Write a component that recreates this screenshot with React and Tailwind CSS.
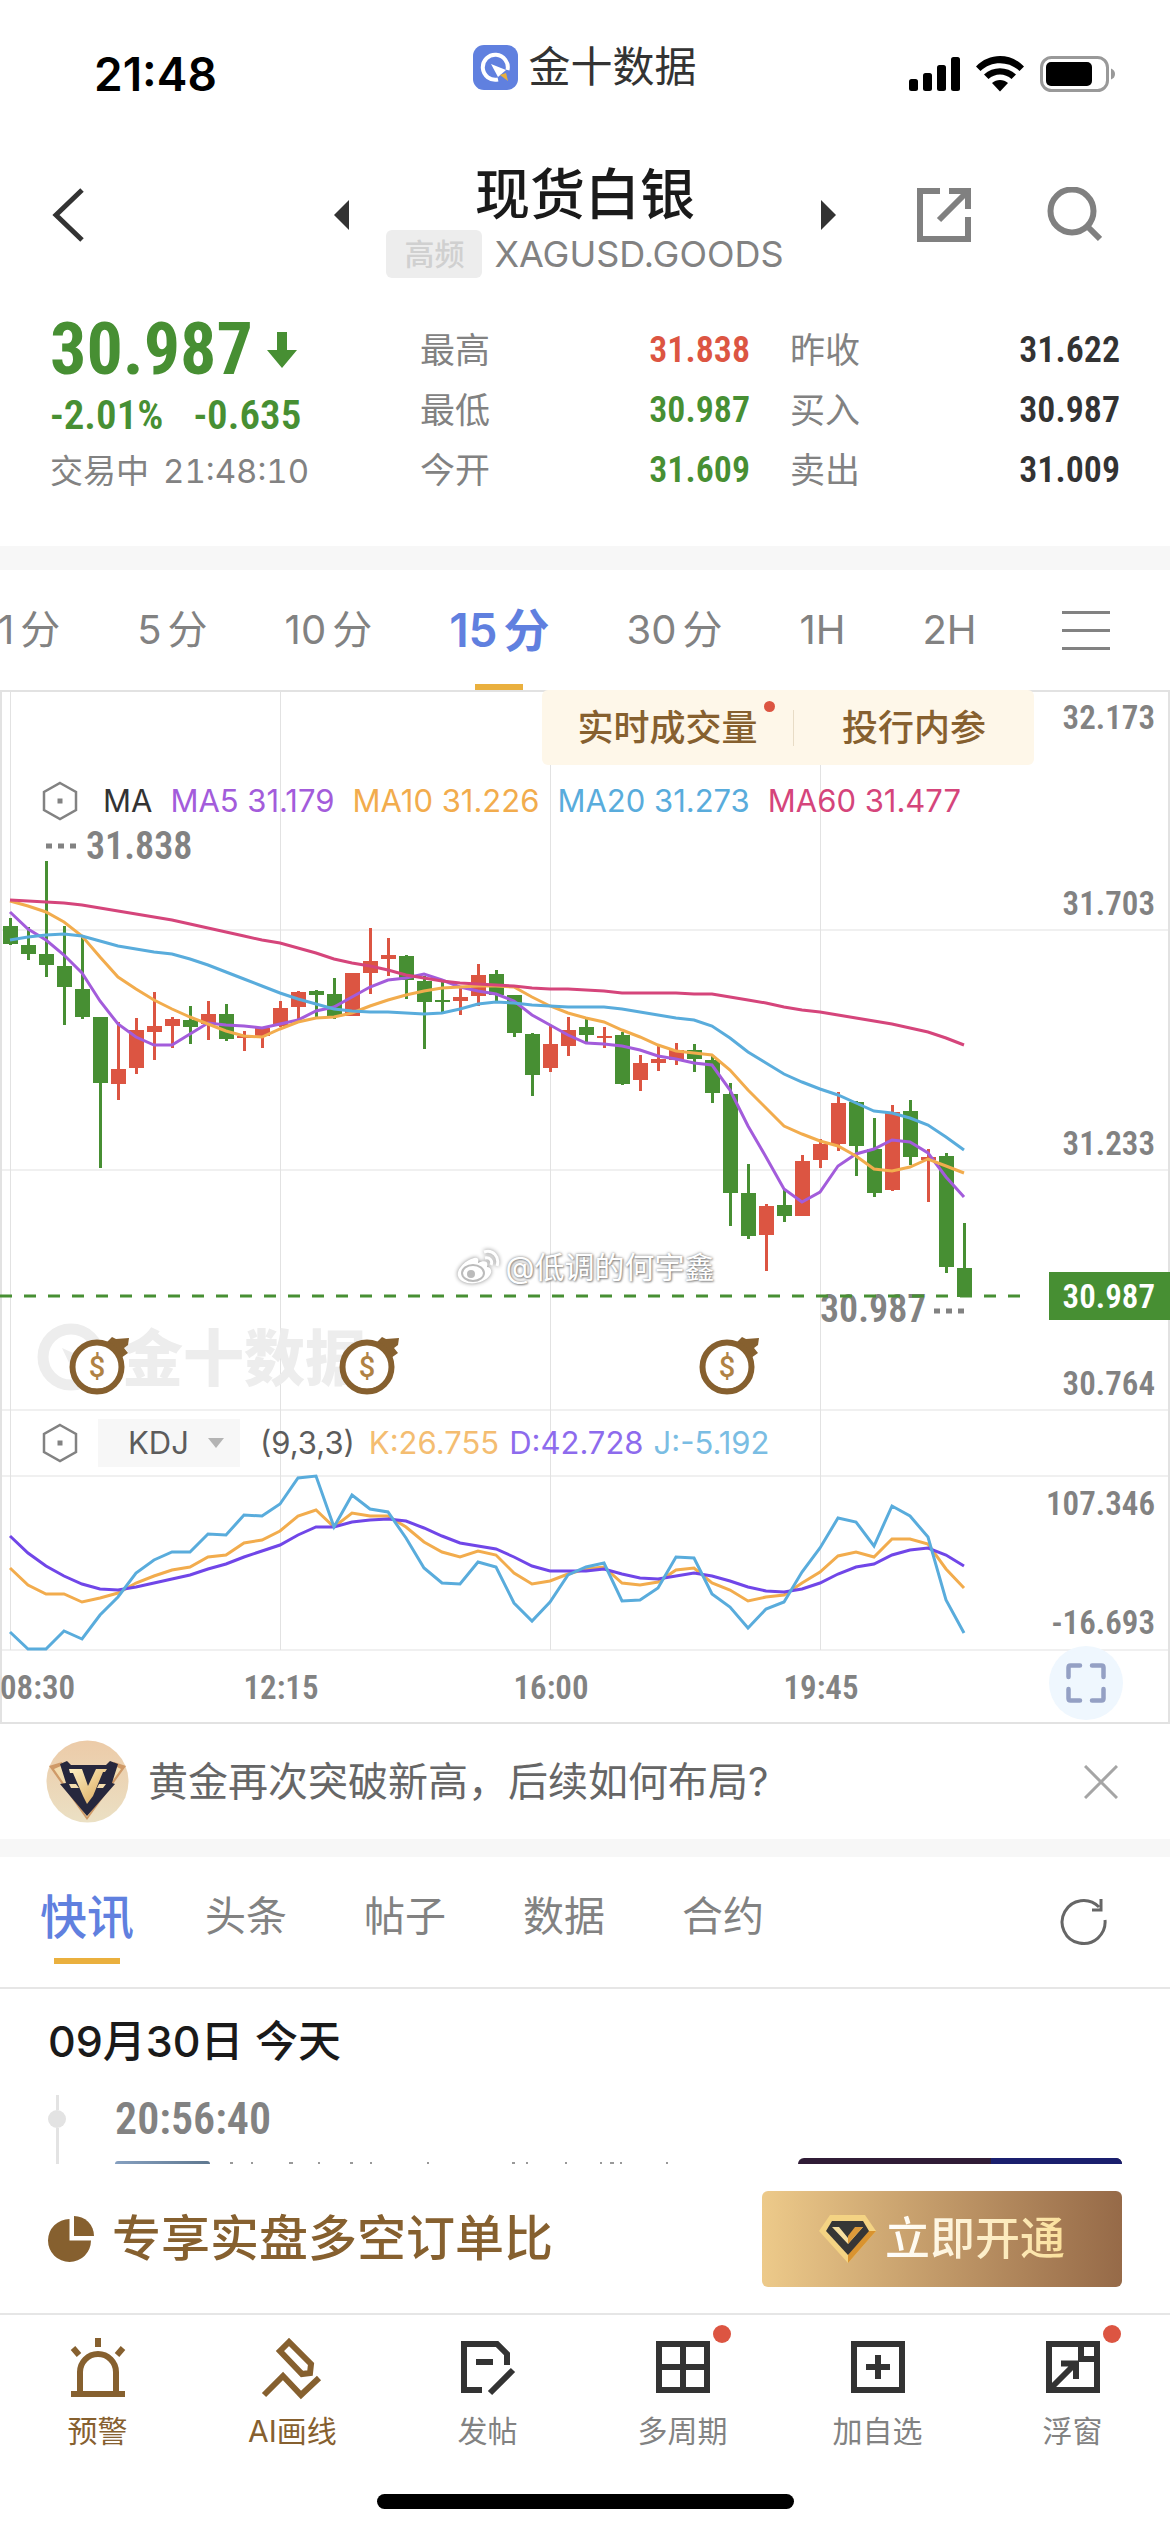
import React from "react";
import clsx from "clsx";

const DIN = "font-['Roboto_Condensed','Liberation_Sans_Narrow',Roboto,sans-serif] font-semibold";

const GREEN = "#478f33";
const RED = "#dc5542";

const periods = [
  { num: "1", unit: "分" },
  { num: "5", unit: "分" },
  { num: "10", unit: "分" },
  { num: "15", unit: "分", active: true },
  { num: "30", unit: "分" },
  { num: "1H" },
  { num: "2H" },
];

// up/down, high, body top, body bottom, low
const candles = [
  ["d", 918, 926, 944, 945], ["d", 927, 945, 954, 960], ["d", 861, 954, 965, 977],
  ["d", 926, 966, 987, 1025], ["d", 935, 989, 1017, 1019], ["d", 1017, 1017, 1083, 1168],
  ["u", 1022, 1069, 1084, 1100], ["u", 1018, 1030, 1068, 1074], ["u", 992, 1026, 1032, 1060],
  ["u", 1017, 1019, 1026, 1048], ["d", 1006, 1020, 1027, 1044], ["u", 1001, 1014, 1024, 1040],
  ["d", 1004, 1014, 1039, 1041], ["u", 1031, 1036, 1038, 1051], ["u", 1028, 1028, 1036, 1048],
  ["u", 1001, 1008, 1026, 1027], ["u", 991, 992, 1007, 1020], ["d", 990, 991, 995, 1018],
  ["d", 978, 994, 1016, 1019], ["u", 973, 973, 1016, 1016], ["u", 928, 961, 973, 994],
  ["u", 938, 955, 959, 976], ["d", 955, 956, 980, 999], ["d", 976, 981, 1002, 1049],
  ["d", 981, 1000, 1002, 1013], ["u", 987, 997, 1001, 1015], ["u", 964, 975, 996, 1006],
  ["d", 970, 974, 995, 1001], ["d", 995, 995, 1033, 1037], ["d", 1033, 1034, 1075, 1096],
  ["u", 1025, 1044, 1068, 1072], ["u", 1017, 1030, 1046, 1056], ["d", 1018, 1027, 1035, 1042],
  ["u", 1027, 1036, 1038, 1048], ["d", 1032, 1035, 1084, 1085], ["u", 1055, 1063, 1080, 1091],
  ["u", 1045, 1059, 1063, 1071], ["u", 1043, 1050, 1060, 1065], ["d", 1044, 1050, 1059, 1072],
  ["d", 1056, 1060, 1093, 1103], ["d", 1083, 1094, 1193, 1226], ["d", 1164, 1193, 1236, 1239],
  ["u", 1204, 1206, 1235, 1271], ["d", 1190, 1205, 1216, 1222], ["u", 1155, 1161, 1216, 1216],
  ["u", 1139, 1144, 1160, 1168], ["u", 1092, 1103, 1144, 1151], ["d", 1101, 1102, 1146, 1176],
  ["d", 1118, 1149, 1193, 1197], ["u", 1105, 1112, 1190, 1191], ["d", 1100, 1111, 1157, 1165],
  ["u", 1149, 1157, 1160, 1202], ["d", 1153, 1156, 1267, 1273], ["d", 1223, 1268, 1297, 1297],
];

const maLines = [
  {
    color: "#a35cdb",
    ys: [912, 929, 940, 955, 973, 1001, 1024, 1037, 1045, 1045, 1034, 1023, 1025, 1026, 1028, 1024, 1020, 1011, 1007, 997, 987, 980, 978, 974, 980, 987, 991, 994, 1001, 1015, 1025, 1035, 1043, 1044, 1046, 1050, 1056, 1059, 1063, 1065, 1090, 1126, 1157, 1189, 1202, 1192, 1166, 1154, 1149, 1140, 1142, 1153, 1177, 1197],
  },
  {
    color: "#f2ac4d",
    ys: [901, 906, 912, 922, 936, 957, 977, 989, 1000, 1009, 1017, 1024, 1031, 1036, 1037, 1029, 1022, 1018, 1017, 1013, 1006, 1000, 995, 991, 988, 987, 986, 986, 987, 997, 1006, 1013, 1018, 1022, 1030, 1037, 1045, 1051, 1053, 1055, 1070, 1090, 1108, 1126, 1134, 1141, 1146, 1156, 1169, 1171, 1167, 1159, 1166, 1173],
  },
  {
    color: "#59acdc",
    ys: [940, 937, 935, 934, 936, 941, 946, 949, 952, 954, 959, 965, 972, 979, 986, 993, 999, 1004, 1009, 1011, 1012, 1012, 1013, 1014, 1013, 1009, 1004, 1002, 1003, 1005, 1006, 1007, 1007, 1007, 1009, 1012, 1015, 1018, 1020, 1026, 1038, 1052, 1063, 1074, 1082, 1089, 1095, 1103, 1111, 1113, 1118, 1125, 1137, 1150],
  },
  {
    color: "#d5457b",
    ys: [900, 901, 902, 903, 905, 908, 911, 914, 917, 920, 924, 928, 932, 936, 940, 943, 948, 953, 959, 963, 966, 970, 975, 978, 981, 983, 984, 985, 986, 988, 989, 989, 990, 991, 993, 993, 993, 993, 994, 994, 997, 1000, 1003, 1007, 1010, 1012, 1015, 1018, 1021, 1024, 1028, 1032, 1038, 1045],
  },
];

const kdjLines = [
  {
    color: "#f2ac4d",
    ys: [1568, 1585, 1594, 1594, 1602, 1598, 1593, 1583, 1576, 1570, 1567, 1557, 1555, 1543, 1540, 1531, 1516, 1510, 1527, 1513, 1516, 1516, 1527, 1542, 1552, 1557, 1551, 1555, 1573, 1584, 1581, 1574, 1569, 1567, 1583, 1585, 1582, 1570, 1568, 1583, 1590, 1601, 1597, 1595, 1583, 1572, 1556, 1552, 1557, 1539, 1539, 1544, 1569, 1588],
  },
  {
    color: "#7046e8",
    ys: [1536, 1553, 1566, 1576, 1584, 1589, 1590, 1587, 1583, 1579, 1575, 1569, 1564, 1557, 1551, 1545, 1535, 1527, 1527, 1522, 1520, 1519, 1521, 1528, 1536, 1543, 1546, 1549, 1557, 1566, 1571, 1571, 1571, 1569, 1574, 1578, 1579, 1576, 1573, 1576, 1581, 1587, 1591, 1592, 1589, 1583, 1574, 1567, 1564, 1555, 1550, 1548, 1555, 1566],
  },
  {
    color: "#59acdc",
    ys: [1632, 1649, 1649, 1631, 1639, 1615, 1597, 1573, 1560, 1552, 1552, 1534, 1535, 1515, 1516, 1504, 1478, 1476, 1527, 1495, 1509, 1512, 1538, 1568, 1583, 1584, 1562, 1567, 1603, 1621, 1602, 1575, 1567, 1563, 1601, 1600, 1588, 1557, 1558, 1594, 1607, 1628, 1609, 1602, 1572, 1548, 1518, 1522, 1546, 1506, 1516, 1537, 1600, 1633],
  },
];

const axisLabels = [
  ["32.173", 717], ["31.703", 903], ["31.233", 1143], ["30.764", 1383],
  ["107.346", 1503], ["-16.693", 1622],
];

const xAt = (i) => 10 + i * 18;
const toPoints = (ys) => ys.map((y, i) => `${xAt(i)},${y}`).join(" ");

const Line = ({ color, ys }) => (
  <polyline points={toPoints(ys)} fill="none" stroke={color} strokeWidth="3" />
);

const MoneyBag = ({ x }) => (
  <g transform={`translate(${x} 1367)`}>
    <path d="M12 -21 L10 -25 L15 -30 L19 -28 L32 -29 L31 -22 L27 -19 L31 -14 L24 -9 Z" fill="#86602f" />
    <circle r="24.5" fill="#fff" stroke="#86602f" strokeWidth="6" />
    <path d="M-14 20 A25 25 0 0 0 14 20 A30 30 0 0 1 -14 20" fill="#86602f" stroke="#86602f" strokeWidth="4" />
    <text y="10" textAnchor="middle" fontSize="29" fill="#b08244" className="font-[Roboto,sans-serif] font-medium">$</text>
  </g>
);

const Chart = () => (
  <svg viewBox="0 690 1170 1034" className="absolute inset-0 h-full w-full" aria-hidden="true">
    <g stroke="#f0f0f0" strokeWidth="2">
      {[930, 1170, 1410, 1476, 1650].map((y) => (
        <line key={y} x1="0" x2="1170" y1={y} y2={y} />
      ))}
    </g>
    <g stroke="#e2e2e2" strokeWidth="1">
      {[10.5, 280.5, 550.5, 820.5].map((x) => (
        <line key={x} x1={x} x2={x} y1="690" y2="1650" />
      ))}
    </g>
    <rect x="1" y="691" width="1168" height="1032" fill="none" stroke="#e2e2e2" strokeWidth="2" />

    {/* faded brand mark */}
    <circle cx="71" cy="1357" r="28" fill="none" stroke="#ededed" strokeWidth="11" />
    <path d="M62 1348 L82 1357 L71 1367 Z" fill="#ededed" />
    <text x="122" y="1381" fontSize="61" fill="#ededed" className="font-['Noto_Sans_CJK_SC',sans-serif] font-black">金十数据</text>

    <g className={DIN} fill="#828282" fontSize="38">
      <text x="86" y="859">31.838</text>
      <text x="820" y="1322">30.987</text>
    </g>
    <path d="M46 846h6m6 0h6m6 0h6M934 1311h6m6 0h6m6 0h6" stroke="#828282" strokeWidth="5" />

    <line x1="0" x2="1022" y1="1296" y2="1296" stroke={GREEN} strokeWidth="3" strokeDasharray="12 12" />
    {candles.map(([dir, high, top, bottom, low], i) => (
      <g key={i} fill={dir === "u" ? RED : GREEN}>
        <rect x={xAt(i) - 1} y={high} width="3" height={low - high} />
        <rect x={xAt(i) - 7} y={top} width="15" height={bottom - top} />
      </g>
    ))}
    {maLines.map((line) => <Line key={line.color} {...line} />)}
    {kdjLines.map((line) => <Line key={line.color} {...line} />)}

    <MoneyBag x={97} />
    <MoneyBag x={367} />
    <MoneyBag x={727} />

    <rect x="1049" y="1272" width="121" height="48" fill={GREEN} />
    <g className={DIN} fontSize="33" fill="#828282">
      {axisLabels.map(([label, y]) => (
        <text key={label} x="1155" y={y + 12} textAnchor="end">{label}</text>
      ))}
      <text x="1155" y="1308" textAnchor="end" fill="#fff">30.987</text>
      <text x="0" y="1699">08:30</text>
      <text x="281" y="1699" textAnchor="middle">12:15</text>
      <text x="551" y="1699" textAnchor="middle">16:00</text>
      <text x="821" y="1699" textAnchor="middle">19:45</text>
    </g>
  </svg>
);

const Hexagon = () => (
  <svg viewBox="0 0 36 40" className="h-[40px] w-[36px]">
    <path d="M18 2 L34 11 V29 L18 38 L2 29 V11 Z" fill="none" stroke="#828282" strokeWidth="2.5" />
    <rect x="15.5" y="17.5" width="5" height="5" fill="#828282" />
  </svg>
);

const StatusBar = () => (
  <div className="grid h-[134px] grid-cols-3 items-center pl-[94px] pr-[54px]">
    <span className="pt-[14px] text-[46px] font-semibold leading-none text-black">21:48</span>
    <div className="-ml-10 flex items-center justify-center gap-[10px]">
      <svg viewBox="0 0 45 45" className="size-[45px]">
        <rect width="45" height="45" rx="11" fill="#6080df" />
        <path d="M25 34.5 A12.5 12.5 0 1 1 34.5 25" fill="none" stroke="#fff" strokeWidth="4" />
        <path d="M18 19 L33 25 L25 32 Z" fill="#fff" />
        <path d="M27 30 L33 28 L35 36 Z" fill="#e9af3c" />
      </svg>
      <span className="text-[42px] leading-none text-[#333]">金十数据</span>
    </div>
    <div className="flex items-center justify-end gap-[16px] pt-[14px]">
      <svg viewBox="0 0 51 34" className="h-[34px] w-[51px]">
        <rect y="22" width="9" height="12" rx="2.5" />
        <rect x="14" y="16" width="9" height="18" rx="2.5" />
        <rect x="28" y="8" width="9" height="26" rx="2.5" />
        <rect x="42" width="9" height="34" rx="2.5" />
      </svg>
      <svg viewBox="0 0 48 36" className="h-[36px] w-[48px]">
        <path d="M0 10.500 C13 -3.500 35 -3.500 48 10.500 L43.500 15 C33 4.500 15 4.500 4.500 15 Z" />
        <path d="M8 18.500 C17 10 31 10 40 18.500 L35.500 23 C29 17 19 17 12.500 23 Z" />
        <path d="M16 27 C20.500 23 27.500 23 32 27 L24 35.500 Z" />
      </svg>
      <svg viewBox="0 0 76 36" className="h-[36px] w-[76px]">
        <rect x="1.500" y="1.500" width="66" height="33" rx="10" fill="none" stroke="#999" strokeWidth="3" />
        <rect x="6" y="6" width="46" height="24" rx="5" />
        <path d="M71 12.500 Q75 14 75 18 T71 23.500 Z" fill="#999" />
      </svg>
    </div>
  </div>
);

const Header = () => (
  <header className="grid h-[156px] grid-cols-[284px_1fr_284px] items-center px-[50px] pt-[6px]">
    <button aria-label="返回" className="w-[40px]">
      <svg viewBox="0 0 36 54" className="h-[54px] w-[36px]">
        <path d="M32 2 L6 27 L32 52" fill="none" stroke="#333" strokeWidth="5" />
      </svg>
    </button>
    <div className="flex items-center justify-between">
      <button aria-label="上一个">
        <svg viewBox="0 0 15 30" className="h-[30px] w-[15px]"><path d="M15 0 V30 L0 15 Z" fill="#333" /></svg>
      </button>
      <div className="flex flex-col items-center gap-[6px] pt-[12px]">
        <h1 className="text-[55px] font-medium leading-[60px] text-[#1a1a1a]">现货白银</h1>
        <div className="flex items-center gap-[12px]">
          <span className="flex h-[48px] w-[96px] items-center justify-center rounded-md bg-[#ededed] text-[30px] font-medium text-[#d0d0d0]">高频</span>
          <span className="text-[36px] leading-none text-[#828282]">XAGUSD.GOODS</span>
        </div>
      </div>
      <button aria-label="下一个">
        <svg viewBox="0 0 15 30" className="h-[30px] w-[15px]"><path d="M0 0 V30 L15 15 Z" fill="#333" /></svg>
      </button>
    </div>
    <div className="flex items-center justify-end gap-[74px] pr-[18px]">
      <button aria-label="分享">
        <svg viewBox="0 0 56 56" className="size-[56px]">
          <path d="M24 4 H4 V52 H52 V30 M33 4 H52 V22 M52 4 L23 33" fill="none" stroke="#808080" strokeWidth="6" />
        </svg>
      </button>
      <button aria-label="搜索">
        <svg viewBox="0 0 56 56" className="size-[56px]">
          <circle cx="26" cy="24" r="21.5" fill="none" stroke="#808080" strokeWidth="6" />
          <path d="M41 39 L54 52" stroke="#808080" strokeWidth="6" />
        </svg>
      </button>
    </div>
  </header>
);

const Quote = ({ label, value, color }) => (
  <div className="flex h-[60px] items-center justify-between">
    <dt className="text-[35px] text-[#828282]">{label}</dt>
    <dd className={clsx(DIN, "text-[36px]", color)}>{value}</dd>
  </div>
);

const Quotes = () => (
  <section className="grid h-[256px] grid-cols-3 gap-10 px-[50px] pt-[30px]">
    <div className="whitespace-nowrap">
      <div className={clsx(DIN, "flex h-[60px] items-center gap-[14px] text-[72px] text-[#478f33]")}>
        <span className="font-bold">30.987</span>
        <svg viewBox="0 0 30 36" className="h-[36px] w-[30px]"><path d="M10 0 H20 V18 H30 L15 36 L0 18 H10 Z" fill={GREEN} /></svg>
      </div>
      <div className={clsx(DIN, "flex h-[72px] items-center gap-[30px] text-[41px] text-[#478f33]")}>
        <span>-2.01%</span>
        <span>-0.635</span>
      </div>
      <div className="flex h-[40px] items-center gap-[14px] text-[33px] text-[#828282]">
        <span>交易中</span>
        <span className="tabular-nums">21:48:10</span>
      </div>
    </div>
    <dl>
      <Quote label="最高" value="31.838" color="text-[#dc5542]" />
      <Quote label="最低" value="30.987" color="text-[#478f33]" />
      <Quote label="今开" value="31.609" color="text-[#478f33]" />
    </dl>
    <dl>
      <Quote label="昨收" value="31.622" color="text-[#333]" />
      <Quote label="买入" value="30.987" color="text-[#333]" />
      <Quote label="卖出" value="31.009" color="text-[#333]" />
    </dl>
  </section>
);

const PeriodTabs = () => (
  <nav className="flex h-[120px] items-center justify-between overflow-hidden pr-[60px]">
    <div className="-ml-[2px] flex h-full items-center gap-[77px]">
      {periods.map(({ num, unit, active }) => (
        <button
          key={num}
          className={clsx(
            "relative flex h-full items-center gap-[6px] whitespace-nowrap leading-none",
            active ? "text-[46px] font-semibold text-[#6080df]" : "text-[40px] text-[#828282]"
          )}
        >
          <span>{num}</span>
          {unit && <span>{unit}</span>}
          {active && <span className="absolute bottom-0 left-1/2 h-[6px] w-[48px] -translate-x-1/2 bg-[#eab03e]" />}
        </button>
      ))}
    </div>
    <button aria-label="更多周期" className="flex w-[48px] flex-col gap-[15px]">
      <span className="h-[3px] bg-[#828282]" />
      <span className="h-[3px] bg-[#828282]" />
      <span className="h-[3px] bg-[#828282]" />
    </button>
  </nav>
);

const ChartSection = () => (
  <section className="relative flex h-[1034px] flex-col">
    <Chart />
    {/* 实时成交量 / 投行内参 */}
    <div className="relative mr-[136px] flex h-[75px] w-[492px] items-center self-end rounded-md bg-[#fef7e9] text-[36px] font-medium text-[#86602f]">
      <button className="relative flex-1">
        实时成交量
        <span className="absolute right-[18px] top-0 size-[11px] rounded-full bg-[#dc5542]" />
      </button>
      <span className="h-[36px] w-px bg-[#e8dcc6]" />
      <button className="w-[240px]">投行内参</button>
    </div>
    <div className="relative mt-[16px] flex h-[40px] items-center gap-[20px] whitespace-nowrap pl-[42px] text-[31px]">
      <Hexagon />
      <div className="flex gap-[18px] pl-[5px]">
        <span className="text-[#333]">MA</span>
        <span className="text-[#a35cdb]">MA5 31.179</span>
        <span className="text-[#f2ac4d]">MA10 31.226</span>
        <span className="text-[#59acdc]">MA20 31.273</span>
        <span className="text-[#d5457b]">MA60 31.477</span>
      </div>
    </div>
    {/* user watermark */}
    <div className="relative mt-[424px] flex h-[44px] items-center justify-center gap-[6px]">
      <svg viewBox="0 0 44 36" className="h-[36px] w-[44px] drop-shadow-[0_0_2px_#888]">
        <path d="M18 9 C9 11 0 21 2 27 C5 37 27 37 34 26 C37 21 34 18 31 18 C33 12 28 11 22 14 C23 10 22 8 18 9 Z" fill="#fff" />
        <ellipse cx="17" cy="24" rx="11" ry="8" fill="none" stroke="#bbb" strokeWidth="2" />
        <circle cx="15" cy="25" r="4" fill="#bbb" />
        <path d="M28 3 C37 0 44 8 41 17 M29 9 C34 8 37 12 35 16" fill="none" stroke="#fff" strokeWidth="3" />
      </svg>
      <span className="text-[30px] leading-none text-white [text-shadow:0_0_3px_#777,1px_1px_2px_#999]">@低调的何宇鑫</span>
    </div>
    <div className="relative mt-[122px] flex h-[64px] items-center gap-[20px] whitespace-nowrap pl-[42px] text-[31px]">
      <Hexagon />
      <label className="relative flex h-[48px] w-[142px] items-center bg-[#f7f7f7]">
        <select aria-label="指标" className="w-full appearance-none bg-transparent pl-[30px] text-[31px] text-[#5c5c5c]">
          <option>KDJ</option>
        </select>
        <svg viewBox="0 0 16 10" className="absolute right-[16px] h-[10px] w-[16px]"><path d="M0 0 H16 L8 10 Z" fill="#b4b4b4" /></svg>
      </label>
      <div className="flex gap-[10px]">
        <span className="pr-[4px] text-[#5c5c5c]">(9,3,3)</span>
        <span className="text-[#f4bd71]">K:26.755</span>
        <span className="text-[#8d6bed]">D:42.728</span>
        <span className="text-[#7abde3]">J:-5.192</span>
      </div>
    </div>
    <button aria-label="全屏" className="relative mb-[4px] mr-[47px] mt-auto flex size-[74px] items-center justify-center self-end rounded-full bg-[#eff7fe]">
      <svg viewBox="0 0 40 40" className="size-[40px]">
        <path d="M2.500 14 V4.500 Q2.500 2.500 4.500 2.500 H14 M26 2.500 H35.500 Q37.500 2.500 37.500 4.500 V14 M37.500 26 V35.500 Q37.500 37.500 35.500 37.500 H26 M14 37.500 H4.500 Q2.500 37.500 2.500 35.500 V26" fill="none" stroke="#94a0c4" strokeWidth="4.500" strokeLinecap="round" />
      </svg>
    </button>
  </section>
);

const Promo = () => (
  <div className="flex h-[115px] items-center pl-[46px] pr-[52px]">
    <svg viewBox="0 0 83 83" className="size-[83px]">
      <defs>
        <linearGradient id="avatar" x1="0" y1="0" x2="0" y2="1">
          <stop offset="0" stopColor="#eccba8" />
          <stop offset="1" stopColor="#ebe0c4" />
        </linearGradient>
        <linearGradient id="gold" x1="0" y1="0" x2="1" y2="1">
          <stop offset="0" stopColor="#fff1c4" />
          <stop offset="1" stopColor="#d9a558" />
        </linearGradient>
      </defs>
      <circle cx="41.500" cy="41.500" r="41" fill="url(#avatar)" />
      <path d="M3 26 L16 22 L22 45 H18 L41 74 L65 45 H61 L68 22 L80 26 L41 80 Z" fill="#cf9a68" />
      <path d="M8 29 L15 26 L22 46 L41 75 L61 46 L69 26 L75 29 L41 77 Z" fill="#f3dcae" />
      <path d="M14 24 L21 21 L25 25 H60 L64 21 L72 24 L66 43 L69 44 L41 76 L14 44 L20 43 Z" fill="#26273d" />
      <path d="M23 29 H36 L42 46 L50 29 H61 L59 32 L57 32 L47 56 L41 64 L37 56 L27 33 H24 Z" fill="url(#gold)" />
      <path d="M23 44 H30 L33 48 H25 Z M53 44 H60 L57 48 H51 Z" fill="#f3dcae" />
    </svg>
    <p className="ml-[19px] flex-1 text-[40px] text-[#666]">黄金再次突破新高，后续如何布局?</p>
    <button aria-label="关闭">
      <svg viewBox="0 0 34 34" className="size-[34px]"><path d="M1 1 L33 33 M33 1 L1 33" stroke="#a5a5a5" strokeWidth="3" /></svg>
    </button>
  </div>
);

const NewsTabs = () => (
  <nav className="flex h-[132px] items-center justify-between border-b-2 border-[#e6e6e6] pl-[40px] pr-[62px]">
    <div className="flex h-full items-center gap-[77px] pb-[12px] text-[41px] leading-none text-[#828282]">
      <button className="relative -mr-[6px] text-[47px] font-medium text-[#6080df]">
        快讯
        <span className="absolute -bottom-[24px] left-1/2 h-[6px] w-[66px] -translate-x-1/2 bg-[#eab03e]" />
      </button>
      <button>头条</button>
      <button>帖子</button>
      <button>数据</button>
      <button>合约</button>
    </div>
    <button aria-label="刷新">
      <svg viewBox="0 0 48 48" className="size-[48px]">
        <path d="M45 22 A21.500 21.500 0 1 1 39 9 M41 1 V12 H32" fill="none" stroke="#666" strokeWidth="3" />
      </svg>
    </button>
  </nav>
);

const NewsFeed = () => (
  <section className="flex flex-1 flex-col overflow-hidden px-[48px] pt-[26px]">
    <h2 className="text-[43px] font-medium leading-[52px] text-[#1a1a1a]">09月30日 今天</h2>
    <div className="mt-[28px] flex h-[69px]">
      <div className="flex w-[18px] flex-col items-center">
        <span className="h-[15px] w-[3px] bg-[#e3e3e3]" />
        <span className="size-[18px] shrink-0 rounded-full bg-[#e3e3e3]" />
        <span className="w-[3px] flex-1 bg-[#e3e3e3]" />
      </div>
      <div className="ml-[49px] flex flex-1 flex-col justify-between">
        <time className={clsx(DIN, "text-[44px] leading-[48px] text-[#828282]")}>20:56:40</time>
        <div className="flex items-end">
          <span className="h-[3px] w-[95px] rounded-t-sm bg-linear-to-r from-[#86a0c0] to-[#5f7890]" />
          <svg viewBox="0 0 450 2" className="ml-[20px] h-[2px] w-[450px]">
            <path d="M0 1h3M21 1h2M59 1h4M88 1h2M120 1h3M140 1h2M197 1h2M282 1h3M296 1h2M335 1h2M370 1h2M380 1h4M390 1h2M436 1h2" stroke="#999" strokeWidth="2" />
          </svg>
          <span className="ml-auto flex h-[6px] w-[324px] overflow-hidden rounded-t-md bg-[#301c36]">
            <span className="ml-auto w-[131px] bg-[#1a1f6e]" />
          </span>
        </div>
      </div>
    </div>
  </section>
);

const VipBar = () => (
  <div className="flex h-[149px] items-center px-[48px]">
    <svg viewBox="0 0 46 46" className="size-[46px]">
      <path d="M21.500 3 V24.500 H43 A21.500 21.500 0 1 1 21.500 3 Z" fill="#86602f" />
      <path d="M26 0 A20 20 0 0 1 46 20 H26 Z" fill="#86602f" />
    </svg>
    <p className="ml-[18px] flex-1 text-[49px] font-medium text-[#86602f]">专享实盘多空订单比</p>
    <button className="flex h-[96px] w-[360px] items-center justify-center gap-[8px] rounded-md bg-linear-to-r from-[#edca8a] to-[#966a48]">
      <svg viewBox="0 0 58 48" className="h-[48px] w-[58px]">
        <path d="M11 0 H46 L57 16 L29 48 L0 16 Z" fill="#f4d383" />
        <path d="M47 16 H57 L29 48 V40 Z" fill="#d9932f" />
        <path d="M13 6 H44 L50 16 L29 40 L7 16 Z" fill="#363636" />
        <path d="M13 12 H20 L29 23 L38 12 H44 L29 29 Z" fill="#f7dfa0" />
        <path d="M36 12 H44 L29 29 V21 Z" fill="#dd9a3a" />
      </svg>
      <span className="bg-linear-to-r from-white to-[#fbe09a] bg-clip-text text-[45px] font-medium text-transparent">立即开通</span>
    </button>
  </div>
);

const navItems = [
  {
    label: "预警", gold: true,
    icon: <path d="M10 52 V33 A18 18 0 0 1 46 33 V52 M1 55 H55 M28 -1 V8 M3 9 L9 16 M53 9 L47 16" />,
  },
  {
    label: "AI画线", gold: true,
    icon: <path d="M24 3 L15 12 L37 35 L45 34 L46 25 L24 3 Z M-1 56 L18 37 L36 56 L54 39" />,
  },
  {
    label: "发帖",
    icon: <path d="M22 51 H4 V5 H37 L47 15 V26 M16 23 H33 M30 54 L53 31" />,
  },
  {
    label: "多周期", dot: true,
    icon: <path d="M4 5 H52 V51 H4 Z M28 5 V51 M4 28 H52" />,
  },
  {
    label: "加自选",
    icon: <path d="M4 5 H52 V51 H4 Z M28 16 V40 M16 28 H40" />,
  },
  {
    label: "浮窗", dot: true,
    icon: <path d="M4 5 H52 V51 H4 Z M36 5 V20 H52 M5 50 L30 25 M16 24.500 H31 V40" />,
  },
];

const BottomNav = () => (
  <nav className="grid h-[150px] grid-cols-6 border-t-2 border-[#e6e6e6]">
    {navItems.map(({ label, icon, gold, dot }) => (
      <button key={label} className={clsx("flex flex-col items-center pt-[24px]", gold ? "text-[#86602f]" : "text-[#828282]")}>
        <span className="relative">
          <svg
            viewBox="0 0 56 56"
            className={clsx("size-[56px] overflow-visible", gold ? "text-[#86602f]" : "text-[#333]")}
            fill="none" stroke="currentColor" strokeWidth="6"
          >
            {icon}
          </svg>
          {dot && <span className="absolute -right-[20px] -top-[14px] size-[18px] rounded-full bg-[#dc5542]" />}
        </span>
        <span className="mt-[16px] text-[30px] leading-[40px]">{label}</span>
      </button>
    ))}
  </nav>
);

const App = () => {
  return (
    <div className="flex min-h-screen w-full flex-col overflow-hidden bg-white font-[Inter,'Noto_Sans_CJK_SC',sans-serif]">
      <StatusBar />
      <Header />
      <Quotes />
      <div className="h-[24px] bg-[#f7f7f7]" />
      <PeriodTabs />
      <ChartSection />
      <Promo />
      <div className="h-[18px] bg-[#f7f7f7]" />
      <NewsTabs />
      <NewsFeed />
      <VipBar />
      <BottomNav />
      <div className="flex h-[70px] justify-center pt-[31px]">
        <span className="h-[15px] w-[417px] rounded-full bg-black" />
      </div>
    </div>
  );
};

export default App;
